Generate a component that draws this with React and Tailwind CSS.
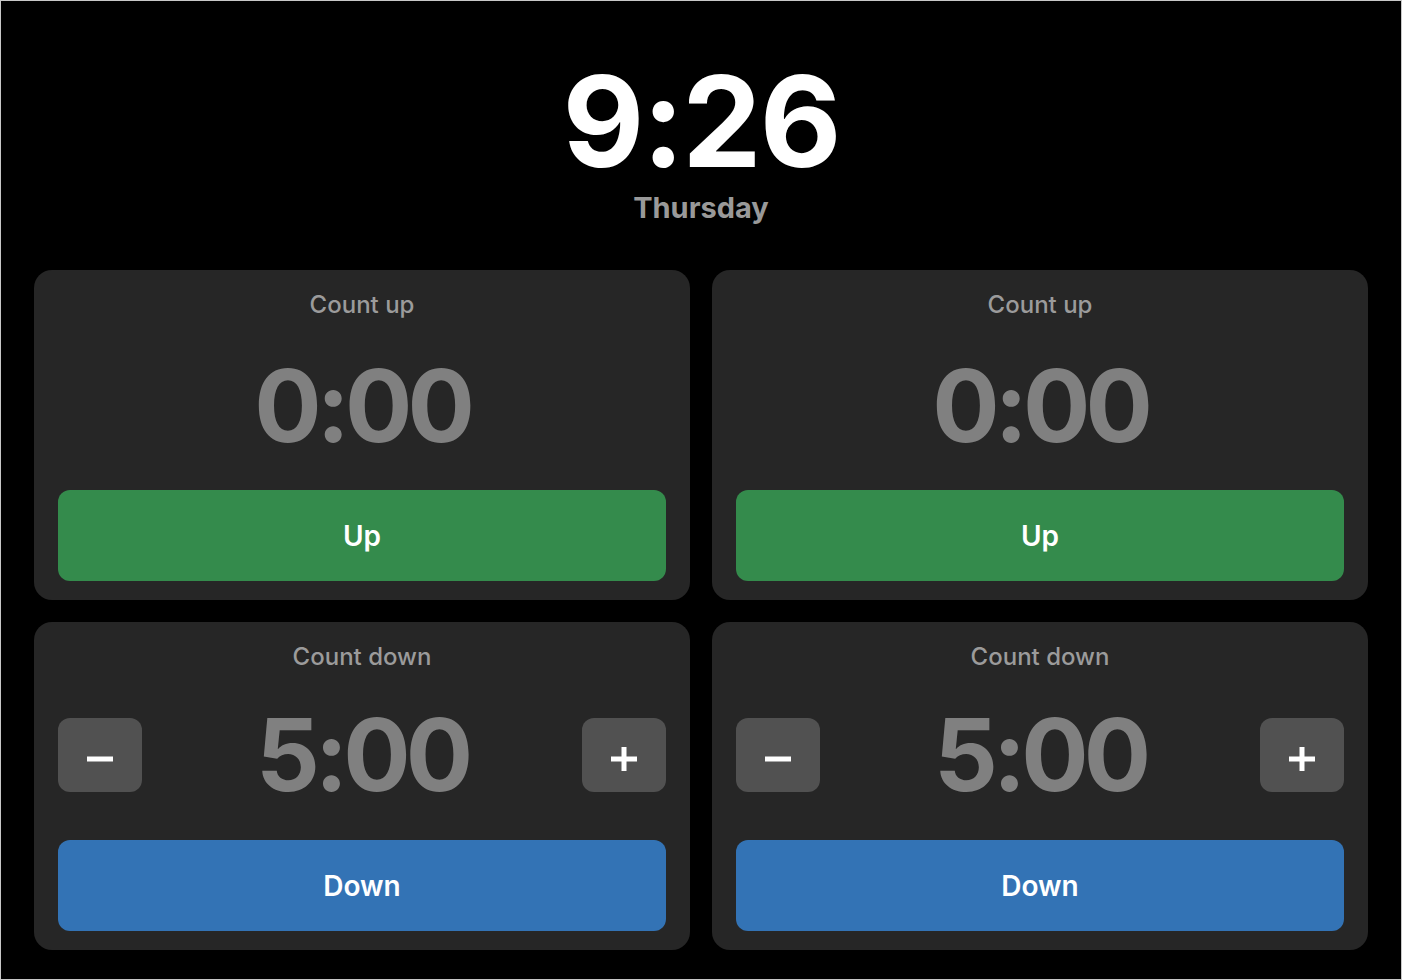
import { useState } from 'react'

const font = { fontFamily: 'Inter, "Noto Sans", sans-serif' }

function formatTime(total) {
  const m = Math.floor(total / 60)
  const s = total % 60
  return `${m}:${String(s).padStart(2, '0')}`
}

function StepButton({ kind, onClick }) {
  return (
    <button
      onClick={onClick}
      className="flex h-[74px] w-[84px] items-center justify-center rounded-[12px] bg-[#515151]"
    >
      <svg width="26" height="26" viewBox="0 0 26 26" className="mt-2" fill="#ffffff">
        <rect x="0" y="10.5" width="26" height="5" />
        {kind === 'plus' && <rect x="10.5" y="1" width="5" height="24" />}
      </svg>
    </button>
  )
}

function CountUpCard() {
  const [seconds, setSeconds] = useState(0)

  return (
    <section className="flex flex-col rounded-[18px] bg-[#262626] px-6 pt-[23px] pb-[19px]">
      <h3 className="text-center text-[24px] font-medium leading-[24px] text-[#9b9b9b]">Count up</h3>
      <div className="mt-[39px] text-center text-[100px] font-bold leading-[100px] tracking-[-5px] text-[#808080]">
        {formatTime(seconds)}
      </div>
      <button
        onClick={() => setSeconds(seconds + 1)}
        className="mt-[34px] h-[91px] rounded-[12px] bg-[#348b4c] text-[28px] font-semibold text-white"
      >
        Up
      </button>
    </section>
  )
}

function CountDownCard() {
  const [seconds, setSeconds] = useState(300)

  return (
    <section className="flex flex-col rounded-[18px] bg-[#262626] px-6 pt-[23px] pb-[19px]">
      <h3 className="text-center text-[24px] font-medium leading-[24px] text-[#9b9b9b]">Count down</h3>
      <div className="mt-[49px] flex h-[74px] items-center justify-between">
        <StepButton kind="minus" onClick={() => setSeconds(Math.max(0, seconds - 60))} />
        <div className="text-[100px] font-bold leading-[100px] tracking-[-5px] text-[#808080]">
          {formatTime(seconds)}
        </div>
        <StepButton kind="plus" onClick={() => setSeconds(seconds + 60)} />
      </div>
      <button
        onClick={() => setSeconds(Math.max(0, seconds - 1))}
        className="mt-12 h-[91px] rounded-[12px] bg-[#3373b5] text-[28px] font-semibold text-white"
      >
        Down
      </button>
    </section>
  )
}

export default function App() {
  return (
    <div style={font} className="flex h-[980px] w-full flex-col border border-[#c8c8c8] bg-black">
      <header className="flex flex-col items-center pt-[50px]">
        <div className="text-[126px] font-bold leading-[140px] tracking-[-2px] text-white">9:26</div>
        <div className="mt-[2px] text-[29px] font-bold leading-[29px] text-[#999999]">Thursday</div>
      </header>
      <div className="mt-[48px] grid grid-cols-2 gap-[22px] px-[33px]">
        <CountUpCard />
        <CountUpCard />
        <CountDownCard />
        <CountDownCard />
      </div>
    </div>
  )
}
